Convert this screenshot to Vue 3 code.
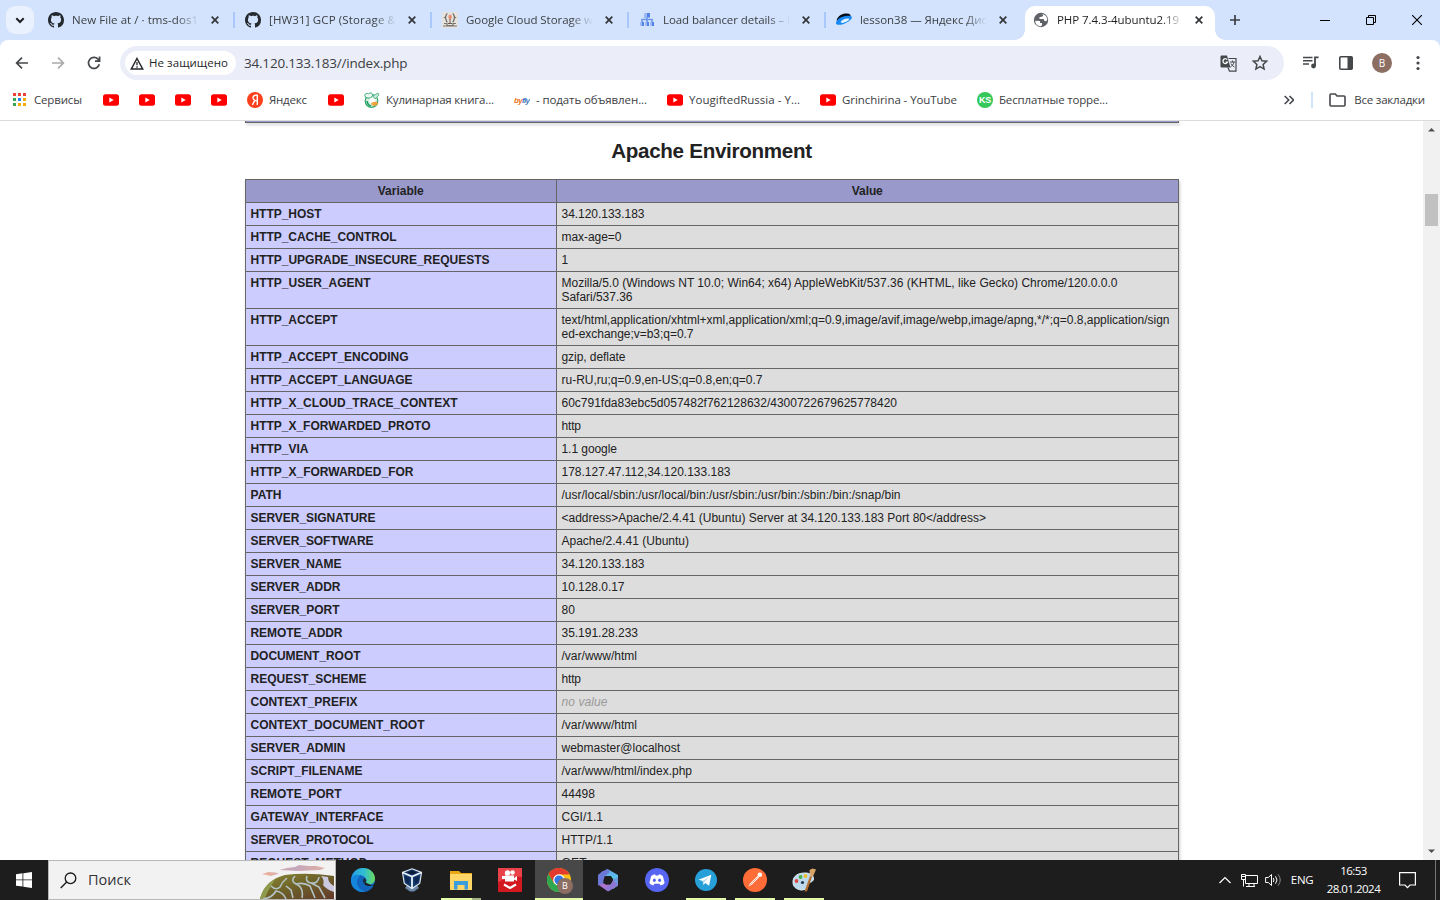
<script setup>
const tabs = [
  { icon: 'github', title: 'New File at / · tms-dos1', w: 126 },
  { icon: 'github', title: '[HW31] GCP (Storage &', w: 127 },
  { icon: 'braces', title: 'Google Cloud Storage w', w: 127 },
  { icon: 'balancer', title: 'Load balancer details – l', w: 127 },
  { icon: 'disk', title: 'lesson38 — Яндекс Дис', w: 127 },
  { icon: 'globe', title: 'PHP 7.4.3-4ubuntu2.19', w: 122, active: true },
]

const bookmarks = [
  { icon: 'apps', title: 'Сервисы', w: 48 },
  { icon: 'youtube' },
  { icon: 'youtube' },
  { icon: 'youtube' },
  { icon: 'youtube' },
  { icon: 'yandex', title: 'Яндекс', w: 38 },
  { icon: 'youtube' },
  { icon: 'cook', title: 'Кулинарная книга...', w: 108 },
  { icon: 'byfly', title: '- подать объявлен...', w: 111 },
  { icon: 'youtube', title: 'YougiftedRussia - Y...', w: 111 },
  { icon: 'youtube', title: 'Grinchirina - YouTube', w: 115 },
  { icon: 'ks', title: 'Бесплатные торре...', w: 109 },
]

// [name, name width, [[value line, line width], ...]]
const rows = [
  ['HTTP_HOST', 71, [['34.120.133.183', 83]]],
  ['HTTP_CACHE_CONTROL', 146, [['max-age=0', 60]]],
  ['HTTP_UPGRADE_INSECURE_REQUESTS', 239, [['1', 7]]],
  ['HTTP_USER_AGENT', 120, [['Mozilla/5.0 (Windows NT 10.0; Win64; x64) AppleWebKit/537.36 (KHTML, like Gecko) Chrome/120.0.0.0', 556], ['Safari/537.36', 71]]],
  ['HTTP_ACCEPT', 87, [['text/html,application/xhtml+xml,application/xml;q=0.9,image/avif,image/webp,image/apng,*/*;q=0.8,application/sign', 608], ['ed-exchange;v=b3;q=0.7', 132]]],
  ['HTTP_ACCEPT_ENCODING', 158, [['gzip, deflate', 64]]],
  ['HTTP_ACCEPT_LANGUAGE', 162, [['ru-RU,ru;q=0.9,en-US;q=0.8,en;q=0.7', 201]]],
  ['HTTP_X_CLOUD_TRACE_CONTEXT', 207, [['60c791fda83ebc5d057482f762128632/4300722679625778420', 335.5]]],
  ['HTTP_X_FORWARDED_PROTO', 180, [['http', 19.5]]],
  ['HTTP_VIA', 58, [['1.1 google', 55.5]]],
  ['HTTP_X_FORWARDED_FOR', 163, [['178.127.47.112,34.120.133.183', 169]]],
  ['PATH', 31, [['/usr/local/sbin:/usr/local/bin:/usr/sbin:/usr/bin:/sbin:/bin:/snap/bin', 339]]],
  ['SERVER_SIGNATURE', 125, [['<address>Apache/2.4.41 (Ubuntu) Server at 34.120.133.183 Port 80</address>', 424.5]]],
  ['SERVER_SOFTWARE', 123, [['Apache/2.4.41 (Ubuntu)', 127.5]]],
  ['SERVER_NAME', 91, [['34.120.133.183', 83]]],
  ['SERVER_ADDR', 90, [['10.128.0.17', 63]]],
  ['SERVER_PORT', 89, [['80', 13.5]]],
  ['REMOTE_ADDR', 92, [['35.191.28.233', 76.5]]],
  ['DOCUMENT_ROOT', 110, [['/var/www/html', 75.5]]],
  ['REQUEST_SCHEME', 116, [['http', 19.5]]],
  ['CONTEXT_PREFIX', 107, [['no value', 46]]],
  ['CONTEXT_DOCUMENT_ROOT', 174, [['/var/www/html', 75.5]]],
  ['SERVER_ADMIN', 95, [['webmaster@localhost', 118.5]]],
  ['SCRIPT_FILENAME', 112, [['/var/www/html/index.php', 130.5]]],
  ['REMOTE_PORT', 91, [['44498', 33.5]]],
  ['GATEWAY_INTERFACE', 133, [['CGI/1.1', 41.5]]],
  ['SERVER_PROTOCOL', 123, [['HTTP/1.1', 51.5]]],
  ['REQUEST_METHOD', 117, [['GET', 25]]],
]

const apps = [
  { icon: 'edge' },
  { icon: 'vbox' },
  { icon: 'explorer', state: 'stack' },
  { icon: 'recorder' },
  { icon: 'chrome', state: 'current' },
  { icon: 'm365' },
  { icon: 'discord' },
  { icon: 'telegram', state: 'open' },
  { icon: 'postman', state: 'open' },
  { icon: 'paint', state: 'open' },
]

// Tracks a label so that it takes the given width.
const vFit = {
  mounted(el, { value }) {
    const n = el.textContent.length
    const natural = el.getBoundingClientRect().width
    if (value && n > 1) el.style.letterSpacing = `${(value - natural) / (n - 1)}px`
  },
}
</script>

<template>
  <div class="screen">
    <header class="tabstrip">
      <button class="tab-search">
        <svg width="10" height="7" viewBox="0 0 10 7"><path d="M1.3 1.3 5 5l3.7-3.7" fill="none" stroke="#1f2023" stroke-width="2" /></svg>
      </button>
      <div v-for="(t, i) in tabs" :key="i" class="tab" :class="{ active: t.active, last: i === 4 }">
        <svg class="favicon" width="16" height="16" viewBox="0 0 16 16">
          <path v-if="t.icon === 'github'" fill="#24292f" d="M8 0C3.58 0 0 3.58 0 8c0 3.54 2.29 6.53 5.47 7.59.4.07.55-.17.55-.38 0-.19-.01-.82-.01-1.49-2.01.37-2.53-.49-2.69-.94-.09-.23-.48-.94-.82-1.13-.28-.15-.68-.52-.01-.53.63-.01 1.08.58 1.23.82.72 1.21 1.87.87 2.33.66.07-.52.28-.87.51-1.07-1.78-.2-3.64-.89-3.64-3.95 0-.87.31-1.59.82-2.15-.08-.2-.36-1.02.08-2.12 0 0 .67-.21 2.2.82.64-.18 1.32-.27 2-.27s1.36.09 2 .27c1.53-1.04 2.2-.82 2.2-.82.44 1.1.16 1.92.08 2.12.51.56.82 1.27.82 2.15 0 3.07-1.87 3.75-3.65 3.95.29.25.54.73.54 1.48 0 1.07-.01 1.93-.01 2.2 0 .21.15.46.55.38A8.01 8.01 0 0 0 16 8c0-4.42-3.58-8-8-8z" />
          <g v-else-if="t.icon === 'braces'">
            <path fill="#e6e2dd" d="M0 0h16v16H0z" />
            <path d="M5.500 1.500C3.500 1.500 4.500 5 3 5.500c1.500.500.500 4 2.500 4.500M10.500 1.500c2 0 1 3.500 2.500 4-1.500.500-.5 4-2.500 4.500" fill="none" stroke="#64605c" stroke-width="1.200" />
            <path d="m6.500 3.500 2.500-1 1 3-2 2.500-1.500-2z" fill="#e98b6c" /><path d="M8 7v4M6 11.500h4" stroke="#6a5a50" />
            <path d="M2 11.500h3v2h6v-2h3M1 14h14" fill="none" stroke="#77726d" stroke-width="1.200" />
          </g>
          <g v-else-if="t.icon === 'balancer'">
            <path fill="#5282e8" d="M5 1h6v4.500H5zM1 10h4v4H1zM6 10h4v4H6zM11 10h4v4h-4z" />
            <path fill="none" stroke="#6d97ec" stroke-width="1.600" d="M8 5v5M3 10V7.500h10V10" />
            <path fill="#9dbbf5" d="M5 1h3v4.500H5zM1 10h2v4H1zM6 10h2v4H6zM11 10h2v4h-2z" />
          </g>
          <g v-else-if="t.icon === 'disk'">
            <path d="M.5 8.500C2 3.500 6 1.300 11 1.500c3 .2 4 1.500 3.500 3L5 9z" fill="#070b13" />
            <path d="M0 10.500C1 7 6 4 11.500 3.800c3.500-.2 5 .7 4.300 2.200C14.500 9 8 12.800 3 12.800c-2.200 0-3.300-.8-3-2.300z" fill="#1689f5" />
            <path d="M4.800 10c1-2.600 4.500-3.800 7.500-3.600 1.500.2.900 1.500-.5 2.300-1.900 1.400-4.300 2.300-6 2.200-.7 0-1.200-.4-1-.9z" fill="#e4f4ff" />
          </g>
          <g v-else>
            <circle cx="8" cy="8" r="7.200" fill="#5f6368" />
            <path d="M2.200 8.700 7 9v2h2v2.300l-1.200 1C4.500 14 2.300 12 2.200 8.700zM8 2l2 .4V4L8 5H6.500v2h4l1 2 1.800.2 1-1.700C14 4 11 1.600 8 2z" fill="#fff" />
          </g>
        </svg>
        <span class="tab-title"><span v-fit="t.w" class="fit">{{ t.title }}</span></span>
        <svg class="close" width="8" height="8" viewBox="0 0 8 8"><path d="m.7.7 6.600 6.600M7.300.7.700 7.300" stroke="#333639" stroke-width="1.700" /></svg>
      </div>
      <svg class="plus" width="12" height="12" viewBox="0 0 12 12"><path d="M6 1v10M1 6h10" stroke="#3c4043" stroke-width="1.700" /></svg>
      <div class="window-controls">
        <svg width="10" height="10" viewBox="0 0 10 10"><path d="M0 5.500h10" stroke="#000" /></svg>
        <svg width="10" height="10" viewBox="0 0 10 10"><path d="M.5 2.500h7v7h-7zM2.500 2.500v-2h7v7h-2" fill="none" stroke="#000" /></svg>
        <svg width="10" height="10" viewBox="0 0 10 10"><path d="m0 0 10 10M10 0 0 10" stroke="#000" stroke-width="1.100" /></svg>
      </div>
    </header>

    <div class="chrome-body">
      <div class="toolbar">
        <div class="nav">
          <svg width="16" height="16" viewBox="0 0 16 16"><path d="M14 8H3M8 2.600 2.600 8 8 13.400" fill="none" stroke="#45484b" stroke-width="1.700" /></svg>
          <svg width="16" height="16" viewBox="0 0 16 16"><path d="M2 8h11M8 2.600 13.400 8 8 13.400" fill="none" stroke="#a9abad" stroke-width="1.700" /></svg>
          <svg width="16" height="16" viewBox="0 0 16 16"><path d="M13.300 9.300A5.500 5.500 0 1 1 12 4.200l1.300 1.500M13.600 1.500v4.700H9" fill="none" stroke="#45484b" stroke-width="1.700" /></svg>
        </div>
        <div class="omnibox">
          <div class="chip">
            <svg width="14" height="13" viewBox="0 0 14 13"><path d="M7 1.500 12.700 12H1.300z" fill="none" stroke="#27292c" stroke-width="1.500" /><path d="M7 5v3.300M7 9.300v1.400" stroke="#27292c" stroke-width="1.300" /></svg>
            <span v-fit="79" class="fit">Не защищено</span>
          </div>
          <span v-fit="163.5" class="fit url">34.120.133.183//index.php</span>
          <svg class="translate" width="17" height="17" viewBox="0 0 17 17">
            <path d="M1.500.5H7l3.500 12H1.500a1 1 0 0 1-1-1v-10a1 1 0 0 1 1-1z" fill="#45484b" />
            <path d="M7.300 4.700A2.400 2.400 0 1 0 7.600 7H5.400" fill="none" stroke="#fff" stroke-width="1.200" />
            <path d="M8.500 3.500h7.500v12.700H9.500L8 12.500" fill="none" stroke="#45484b" stroke-width="1.200" />
            <path d="M10 7h5M12.500 5.500V7M14 7c-.5 2.500-2 4-3.500 5M11 8.500c.8 1.700 2 2.700 3.500 3.600" fill="none" stroke="#45484b" />
          </svg>
          <svg class="star" width="16" height="16" viewBox="0 0 16 16"><path d="m8 1.500 1.900 4.300 4.700.4-3.500 3.200 1 4.700L8 11.700l-4.100 2.400 1-4.700L1.400 6.200l4.700-.4z" fill="none" stroke="#45484b" stroke-width="1.500" /></svg>
        </div>
        <div class="actions">
          <svg class="queue" width="16" height="16" viewBox="0 0 16 16"><path d="M0 2.500h9.500M0 5.800h9.500M0 9.100h6" stroke="#45484b" stroke-width="1.500" /><path d="M12 11V2.400h3.500" fill="none" stroke="#45484b" stroke-width="1.800" /><circle cx="10.500" cy="11" r="2.400" fill="#45484b" /></svg>
          <svg width="16" height="16" viewBox="0 0 16 16"><rect x="1.800" y="1.800" width="12.400" height="12.400" rx="1" fill="none" stroke="#45484b" stroke-width="1.600" /><path d="M9.500 1.500H14v13H9.500z" fill="#45484b" /></svg>
          <span class="avatar">B</span>
          <svg width="16" height="16" viewBox="0 0 16 16" fill="#45484b"><circle cx="8" cy="2.500" r="1.600" /><circle cx="8" cy="8" r="1.600" /><circle cx="8" cy="13.500" r="1.600" /></svg>
        </div>
      </div>

      <div class="bookmarks">
        <div v-for="(b, i) in bookmarks" :key="i" class="bookmark">
          <svg width="16" height="16" viewBox="0 0 16 16">
            <g v-if="b.icon === 'apps'">
              <path fill="#ea4335" d="M1 1h3v3H1zM6 1h3v3H6zM11 1h3v3h-3z" />
              <path fill="#34a853" d="M1 6h3v3H1zM1 11h3v3H1z" /><path fill="#2a84f0" d="M6 6h3v3H6z" />
              <path fill="#fbab05" d="M11 6h3v3h-3zM6 11h3v3H6zM11 11h3v3h-3z" />
            </g>
            <g v-else-if="b.icon === 'youtube'">
              <rect y="2.300" width="16" height="11.400" rx="2.500" fill="#f00" /><path d="M6.300 5.500v5l4.400-2.500z" fill="#fff" />
            </g>
            <g v-else-if="b.icon === 'yandex'">
              <circle cx="8" cy="8" r="8" fill="#fc3f1d" />
              <path d="M10.300 13V3.300H8.700C6.900 3.300 6 4.300 6 5.700c0 1.300.7 2 1.700 2.700L5.400 13M10.300 8.700H8.400" fill="none" stroke="#fff" stroke-width="1.400" />
            </g>
            <g v-else-if="b.icon === 'cook'">
              <circle cx="7.500" cy="9" r="6.300" fill="#d5eee0" stroke="#2fa56d" stroke-width="1.200" />
              <path d="M1 4.500C0 2 3 .5 4.500 2 6 0 9 1 8.500 3.500L7 6H3z" fill="#eef8f2" stroke="#2fa56d" />
              <circle cx="8.500" cy="8.500" r="3" fill="#fff" /><path d="m9 4 5-3 1 2-4 4z" fill="#c8eadb" stroke="#46ad7b" stroke-width=".8" />
              <path d="m7.500 10.500 5-1 2 2.500-4 2-3-1z" fill="#f0a33d" /><path d="M3 9q.5 4 4 5" stroke="#1f9e60" stroke-width="1.600" fill="none" />
            </g>
            <text v-else-if="b.icon === 'byfly'" class="byfly" x="0" y="10.500"><tspan fill="#ec7622">by</tspan><tspan fill="#3b79be">fly</tspan></text>
            <g v-else>
              <circle cx="8" cy="8" r="8" fill="#34c759" /><text class="ks" x="8" y="11.300" text-anchor="middle">KS</text>
            </g>
          </svg>
          <span v-if="b.title" class="bookmark-title" :style="{ width: b.w + 'px' }"><span v-fit="b.w" class="fit">{{ b.title }}</span></span>
        </div>
        <div class="bookmarks-end">
          <svg width="10" height="10" viewBox="0 0 10 10"><path d="m.7 1 4 4-4 4M5.500 1l4 4-4 4" fill="none" stroke="#45484b" stroke-width="1.600" /></svg>
          <i class="rule"></i>
          <svg class="folder" width="17" height="14" viewBox="0 0 17 14"><path d="M1 2a1 1 0 0 1 1-1h4.300L8 3h7a1 1 0 0 1 1 1v8a1 1 0 0 1-1 1H2a1 1 0 0 1-1-1z" fill="none" stroke="#45484b" stroke-width="1.600" /></svg>
          <span v-fit="71" class="fit">Все закладки</span>
        </div>
      </div>
    </div>

    <main class="viewport">
      <div class="page">
        <div class="table-end"></div>
        <h2><span v-fit="201" class="fit">Apache Environment</span></h2>
        <table>
          <thead>
            <tr><th class="name"><span v-fit="46" class="fit">Variable</span></th><th><span v-fit="31" class="fit">Value</span></th></tr>
          </thead>
          <tbody>
            <tr v-for="[name, w, lines] in rows" :key="name">
              <td class="e"><span v-fit="w" class="fit">{{ name }}</span></td>
              <td class="v">
                <div v-for="[text, lw] in lines" :key="text" class="line"><i v-if="text === 'no value'" v-fit="lw" class="fit">{{ text }}</i><span v-else v-fit="lw" class="fit">{{ text }}</span></div>
              </td>
            </tr>
          </tbody>
        </table>
      </div>
      <div class="scrollbar">
        <svg width="17" height="17" viewBox="0 0 17 17"><path d="M5 10.500 8.500 7l3.500 3.500z" fill="#505050" /></svg>
        <div class="thumb"></div>
        <svg class="down" width="17" height="17" viewBox="0 0 17 17"><path d="M5 6.500 8.500 10 12 6.500z" fill="#505050" /></svg>
      </div>
    </main>

    <footer class="taskbar">
      <div class="start">
        <svg width="16" height="16" viewBox="0 0 16 16"><path fill="#fff" d="M0 2.200 6.500 1.300v6.200H0zM7.300 1.200 16 0v7.500H7.300zM0 8.300h6.500v6.300L0 13.700zM7.300 8.300H16V16l-8.700-1.200z" /></svg>
      </div>
      <div class="search">
        <svg class="lens" width="17" height="17" viewBox="0 0 17 17"><circle cx="10.500" cy="6.300" r="5.300" fill="none" stroke="#1a1a1a" stroke-width="1.300" /><path d="m6.700 10-6 6" stroke="#1a1a1a" stroke-width="1.300" /></svg>
        <span v-fit="43" class="fit">Поиск</span>
        <svg class="art" width="76" height="38" viewBox="0 0 76 38">
          <defs>
            <linearGradient id="hill" x1="0" y1="0" x2="1" y2="1"><stop offset="0" stop-color="#8b8932" /><stop offset=".5" stop-color="#6d6129" /><stop offset="1" stop-color="#63392a" /></linearGradient>
            <linearGradient id="cloud" x1="0" x2="1"><stop offset="0" stop-color="#efb39a" /><stop offset=".5" stop-color="#c3a6bd" /><stop offset="1" stop-color="#e0b0a4" /></linearGradient>
          </defs>
          <path d="M3 13q4-1 6-2 4 0 7 .5l4 1-8 2.500-5-1zM20 9l8-2 8-1 4-2 9 1 8 0 9 2-5 2-12 .5-9 .5z" fill="url(#cloud)" />
          <path d="M1 38C4 26 13 17 26 14q22-3 49 1v23z" fill="url(#hill)" />
          <path d="M1 38c2-9 7-16 15-20-4 8-8 12-10 20z" fill="#8f9a4d" />
          <path d="M4 38q9-1 13-8 7 1 10 8M12 25q5 5 9 1 2-5 7-9M36 15q-5 5 1 8 8 3 6 14M37 23q8-2 14 2l5 12M48 15q-2 6 4 7 7 1 8-6M52 22l8 4 6 11M27 25l5 4 2 8" fill="none" stroke="#b3c3c6" stroke-width="1.600" />
          <path d="M62 15q4 4 2 9 4 5 11 7v-6q-6-3-6-9z" fill="#ccc9e0" />
        </svg>
      </div>
      <div class="apps">
        <div v-for="a in apps" :key="a.icon" class="app" :class="a.state">
          <svg width="24" height="24" viewBox="0 0 24 24">
            <g v-if="a.icon === 'edge'">
              <defs><linearGradient id="eg" x1="0" x2="1"><stop offset="0" stop-color="#279de4" /><stop offset=".55" stop-color="#30bfd3" /><stop offset="1" stop-color="#6bdb5a" /></linearGradient></defs>
              <circle cx="12" cy="12" r="12" fill="#1265bd" />
              <path d="M0 12C1 4 6 0 12 0c7 0 12 5 12 10.500 0 4-3 6-6.500 6-2.500 0-3.500-1-3-2 .7-1 1-2 .7-3C14.500 8.500 11 7 8 7 4 7 1 9 0 12z" fill="url(#eg)" />
              <path d="M0 11c2-4 6-5 9.500-3.500C5.500 10 5 15 7.500 19c1.500 2.500 4 4 6.500 4.700C6 25-1 19 0 11z" fill="#1686dc" />
              <path d="M13.500 14c-1 2 1 4 4.500 4 2 0 3.500-.5 5-1.500L24 15l1 5-2-1.500z" fill="#1d1d1d" />
              <path d="M14 15c-2 0-3.500-2.500-.5-5 2.500 2 2 3.500 1 5z" fill="#1d2c3c" />
            </g>
            <g v-else-if="a.icon === 'vbox'">
              <path d="M7 17h10l2 3-5 3.500h-4L5 20z" fill="#6c86a6" />
              <path d="m12 .8 9.500 3.700-1.800 11L12 20.500l-7.700-5L2.500 4.500z" fill="#143a6b" stroke="#dce7f2" stroke-width="1.200" />
              <path d="m2.500 4.500 9.500 4 9.500-4M12 8.500v12" fill="none" stroke="#e9f2fb" stroke-width="1.800" /><path d="m7 4.500 5-2 5 2-5 2z" fill="#0b1c38" />
              <path d="m5 8 4.500 2-.5 6-3-2zM19 8l-4.500 2 .5 6 3-2z" fill="#0c2750" />
            </g>
            <g v-else-if="a.icon === 'explorer'">
              <path d="M1 3h9l2 2h11v17H1z" fill="#e8a614" /><path d="M1 6h22v16H1z" fill="#ffd667" /><path d="M5 13h14v8.500h-3.500V17h-7v4.500H5z" fill="#3c9ddd" />
            </g>
            <g v-else-if="a.icon === 'recorder'">
              <rect width="24" height="24" rx="1" fill="#d31920" /><path d="M0 0h24v9Q12 8 0 14z" fill="#e8414a" />
              <circle cx="9.500" cy="5" r="2.700" fill="#fff" /><circle cx="14.500" cy="4.500" r="2.300" fill="#fff" />
              <path d="M7 7.500h9v6H7zM16 10l3-2v5l-3-1.500zM4 8h3v3H4z" fill="#fff" /><path d="m6 16.500 6 3.500 6-3.500" fill="none" stroke="#fff" stroke-width="2.200" />
            </g>
            <g v-else-if="a.icon === 'chrome'">
              <circle cx="12" cy="12" r="12" fill="#fbc116" /><path d="M1.600 6A12 12 0 0 0 12 24l5-9-9.500 1z" fill="#2da84f" /><path d="M12 6.500h10.600A12 12 0 0 0 1.600 6l5 8.500z" fill="#e33b2e" />
              <circle cx="12" cy="12" r="5.800" fill="#fff" /><circle cx="12" cy="12" r="4.600" fill="#3478e5" />
            </g>
            <g v-else-if="a.icon === 'm365'">
              <path d="M11.500 1 22 7v3.500L14.500 8 10 8.500 6 6z" fill="#5fb4ec" /><path d="M22 7v10.500L17 21V11l-2.500-3z" fill="#56c4ea" />
              <path d="M2 16.500 6.500 15l4 1.500 4-.5L17 12l5 5.500-10 6z" fill="#a874cf" /><path d="m22 9-5 2.500-2.500 5L9 21l4 2 9-5.500z" fill="#7d78d6" opacity=".6" />
              <path d="M11.500 1 6 3.500 2 7v10.500l5-2 1.500-7L14 4z" fill="#6d79d8" /><path d="m10 8 5 0 2 4-2.500 4.500H9.500L7.500 12z" fill="#1d1d1d" />
            </g>
            <g v-else-if="a.icon === 'discord'">
              <circle cx="12" cy="12" r="12" fill="#5865f2" />
              <path d="M8.200 6.700 10 6.200l.7 1.200h2.600l.7-1.200 1.800.5 2 1.200 1.800 6.800-1 1.500-3 1.300-.9-1.700H9.300l-.9 1.700-3-1.300-1-1.500 1.800-6.800z" fill="#fff" /><ellipse cx="9.400" cy="12.200" rx="1.500" ry="1.700" fill="#5865f2" /><ellipse cx="14.600" cy="12.200" rx="1.500" ry="1.700" fill="#5865f2" />
            </g>
            <g v-else-if="a.icon === 'telegram'">
              <circle cx="12" cy="12" r="11" fill="#279fd9" /><path d="m4.500 11.800 12.800-5-2.200 11-3.800-2.700-2 2-.5-4z" fill="#fff" /><path d="m8.500 13 6.800-4.200-5 5.100-1 3.200z" fill="#b8d8e9" />
            </g>
            <g v-else-if="a.icon === 'postman'">
              <circle cx="12" cy="12" r="12" fill="#ff6c37" /><path d="m5.500 18.500 1.500-3 7.500-7.500 1.500 1.500-7 7z" fill="#fff" /><circle cx="16.800" cy="6.800" r="2.300" fill="#fff" /><path d="m6.500 17.500 8-8" stroke="#ef8a65" stroke-width=".7" />
            </g>
            <g v-else>
              <path d="M1 14C1 8 6 5 13 5c5 0 8.500 2 8.500 6-1 4-3.500 2-5 5-1 4-3 6-7.500 6-5-1-8-3-8-8z" fill="#bdd9ec" stroke="#e5f4fc" />
              <circle cx="4.500" cy="13" r="1.900" fill="#dc4a3f" /><circle cx="8.500" cy="9" r="1.900" fill="#48ae4a" /><circle cx="13.500" cy="8" r="1.900" fill="#f3ba28" /><circle cx="10.500" cy="14.500" r="1.600" fill="#26374c" />
              <path d="M12.500 23.500 18 8l2 .8-5 14.500z" fill="#b76e2e" /><path d="m17.500 2 3-1.500 3.500 1-3 7-3-1z" fill="#d9a468" />
            </g>
          </svg>
          <span v-if="a.icon === 'chrome'" class="badge">B</span>
        </div>
      </div>
      <div class="tray">
        <svg width="12" height="8" viewBox="0 0 12 8"><path d="m.5 7 5.500-5.500L11.500 7" fill="none" stroke="#fff" stroke-width="1.200" /></svg>
        <svg class="net" width="17" height="15" viewBox="0 0 17 15"><path d="M5 2.500h11.500v8h-12v-4M8 13.500v-3M13 13.500v-3M5 13.500h9M.5 1.500h4v5h-4zM2.500 6.500v7M.5 3.500h4" fill="none" stroke="#fff" /></svg>
        <svg class="vol" width="17" height="14" viewBox="0 0 17 14"><path d="M.6 4.500h2.700L6.500 1.500v11l-3.200-3H.6zM8.300 5q1.300 2 0 4M10.500 3.300q3 3.700 0 7.400" fill="none" stroke="#fff" /><path d="M13 1.300q4.500 5.700 0 11.400" fill="none" stroke="#888" /></svg>
        <span v-fit="23" class="fit lang">ENG</span>
        <div class="clock"><span v-fit="27" class="fit">16:53</span><span v-fit="54" class="fit">28.01.2024</span></div>
        <svg class="note" width="17" height="17" viewBox="0 0 17 17"><path d="M.6.600h15.800v12.400H11l-2.500 2.700L6 13H.6z" fill="none" stroke="#fff" stroke-width="1.200" /></svg>
        <i class="peek"></i>
      </div>
    </footer>
  </div>
</template>

<style>
html, body { overflow: hidden; background: #fff; }
</style>

<style scoped>
* { box-sizing: border-box; }
.screen { width: 1440px; height: 900px; display: flex; flex-direction: column; background: #fff; overflow: hidden; font: 11.5px/16px "Open Sans", "Noto Sans", sans-serif; color: #3c4043; }
svg { display: block; flex: none; }
.fit { display: inline-block; white-space: pre; flex: none; }

.tabstrip { height: 40px; flex: none; display: flex; background: #d3e3fd; }
.tab-search { width: 28px; height: 28px; margin: 6px 3px 0 6px; padding: 0; border: 0; border-radius: 9px; background: #e9f1fe; display: grid; place-items: center; }
.tab { width: 197px; height: 40px; display: flex; align-items: center; padding: 0 0 0 11px; position: relative; }
.tab:not(.active):not(.last)::after { content: ""; position: absolute; right: -1px; top: 12px; width: 2px; height: 16px; background: #a8c7fa; }
.favicon { margin-right: 8px; }
.tab-title { width: 128px; height: 16px; overflow: hidden; mask-image: linear-gradient(90deg, #000 105px, transparent 127px); }
.close { margin-left: 11px; }
.tab.active { width: 190px; height: 34px; margin: 6px 0 0 3px; padding: 0 0 6px 8px; background: #fff; border-radius: 10px 10px 0 0; color: #1f1f1f; }
.tab.active .tab-title { width: 124px; }
.tab.active .close { margin-left: 14px; }
.tab.active::before, .tab.active::after { content: ""; position: absolute; bottom: 0; width: 10px; height: 10px; }
.tab.active::before { left: -10px; background: radial-gradient(circle at 0 0, transparent 9.5px, #fff 10px); }
.tab.active::after { right: -10px; background: radial-gradient(circle at 100% 0, transparent 9.5px, #fff 10px); }
.plus { margin: 14px 0 0 14px; }
.window-controls { margin: 15px 18px 0 auto; display: flex; gap: 36px; }

.chrome-body { height: 81px; flex: none; background: linear-gradient(#d3e3fd 12px, #fff 12px); border-bottom: 1px solid #dcdcdc; }
.toolbar { height: 40px; display: flex; padding: 6px 14px 0; background: #fff; border-radius: 8px 8px 0 0; }
.nav { display: flex; gap: 20px; width: 106px; padding: 9px 0 0; }
.omnibox { width: 1164px; height: 34px; border-radius: 17px; background: #ebeef8; display: flex; align-items: center; padding-left: 5px; }
.chip { width: 111px; height: 24px; border-radius: 12px; background: #fff; display: flex; align-items: center; gap: 5px; padding-left: 5px; color: #1f1f1f; }
.url { margin-left: 8px; font-size: 13.5px; line-height: 18px; }
.translate { margin-left: auto; }
.star { margin: 0 16px 0 15px; }
.actions { display: flex; align-items: center; height: 34px; margin-left: 18px; gap: 20px; }
.queue { margin: 0 -1px 0 1px; }
.avatar { width: 20px; height: 20px; margin: 0 -2px; border-radius: 50%; background: #8d6e63; color: #fff; text-align: center; font-size: 10px; line-height: 20px; }

.bookmarks { height: 40px; display: flex; align-items: center; padding-left: 12px; background: #fff; }
.bookmark { display: flex; align-items: center; gap: 6px; margin-right: 20px; }
.bookmark:first-child, .bookmark:nth-child(6) { margin-right: 21px; }
.bookmark-title { height: 16px; }
.byfly { font: italic bold 8px "Liberation Sans", sans-serif; letter-spacing: -.7px; }
.ks { font: bold 9px "Liberation Sans", sans-serif; fill: #fff; letter-spacing: -.3px; }
.bookmarks-end { margin-left: auto; padding-right: 15px; display: flex; align-items: center; }
.rule { width: 2px; height: 16px; margin: 0 16px 0 17px; background: #d3e3fd; }
.folder { margin-right: 8px; }

.viewport { flex: 1; min-height: 0; display: flex; overflow: hidden; font-family: "Liberation Sans", Arial, sans-serif; color: #222; }
.page { width: 1423px; height: 739px; overflow: hidden; padding-left: 245px; }
.table-end { width: 934px; height: 2px; background: #99c; border: 1px solid #666; border-top: 0; box-shadow: 1px 2px 3px #ccc; }
h2 { width: 934px; height: 26px; margin: 15px 0; padding-right: 1px; font-size: 20.6px; line-height: 26px; text-align: center; color: #222; }
table { width: 934px; table-layout: fixed; border-collapse: collapse; box-shadow: 1px 2px 3px #ccc; font-size: 12px; line-height: 14px; }
th, td { border: 1px solid #666; padding: 4px 5px 4px 4.5px; vertical-align: top; }
th { background: #99c; height: 23px; }
th.name { width: 311px; }
.e { background: #ccf; font-weight: bold; }
.v { background: #ddd; }
.line, .e { white-space: nowrap; }
.line { height: 14px; }
.e .fit, th .fit { display: block; width: max-content; height: 14px; }
th .fit { margin: 0 auto; }
.v i { color: #999; }
.scrollbar { width: 17px; background: #f1f1f1; display: flex; flex-direction: column; align-items: center; }
.thumb { width: 13px; height: 32px; margin-top: 56px; background: #c1c1c1; }
.down { margin-top: auto; }

.taskbar { height: 40px; flex: none; display: flex; background: #1d1d1d; color: #fff; }
.start { width: 48px; display: grid; place-items: center; }
.search { width: 288px; height: 40px; border: 1px solid #b8b8b8; background: #f2f2f2; display: flex; align-items: center; padding-left: 11px; color: #333; font-size: 14.5px; line-height: 20px; }
.search .fit { margin-left: 11px; }
.art { margin-left: auto; }
.apps { display: flex; gap: 1px; margin-left: 3px; }
.app { width: 48px; display: grid; place-items: center; position: relative; }
.current { background: #484848; }
.open::after, .stack::after, .current::after { content: ""; position: absolute; bottom: 0; left: 4px; right: 4px; height: 2px; background: #e5fbac; }
.current::after { left: 0; right: 0; }
.stack::after { background: linear-gradient(90deg, #e5fbac 31px, #a4b184 31px); }
.badge { position: absolute; left: 22px; top: 18px; width: 16px; height: 16px; border-radius: 50%; background: #8d6e63; font-size: 9px; line-height: 16px; text-align: center; }
.tray { margin-left: auto; display: flex; align-items: center; }
.net { margin-left: 10px; }
.vol { margin-left: 7px; }
.lang { margin-left: 9px; }
.clock { width: 66px; margin-left: 7px; display: flex; flex-direction: column; align-items: center; line-height: 18px; }
.note { margin-left: 12.5px; }
.peek { width: 1px; height: 40px; margin: 0 4px 0 19px; background: #777; }
</style>
